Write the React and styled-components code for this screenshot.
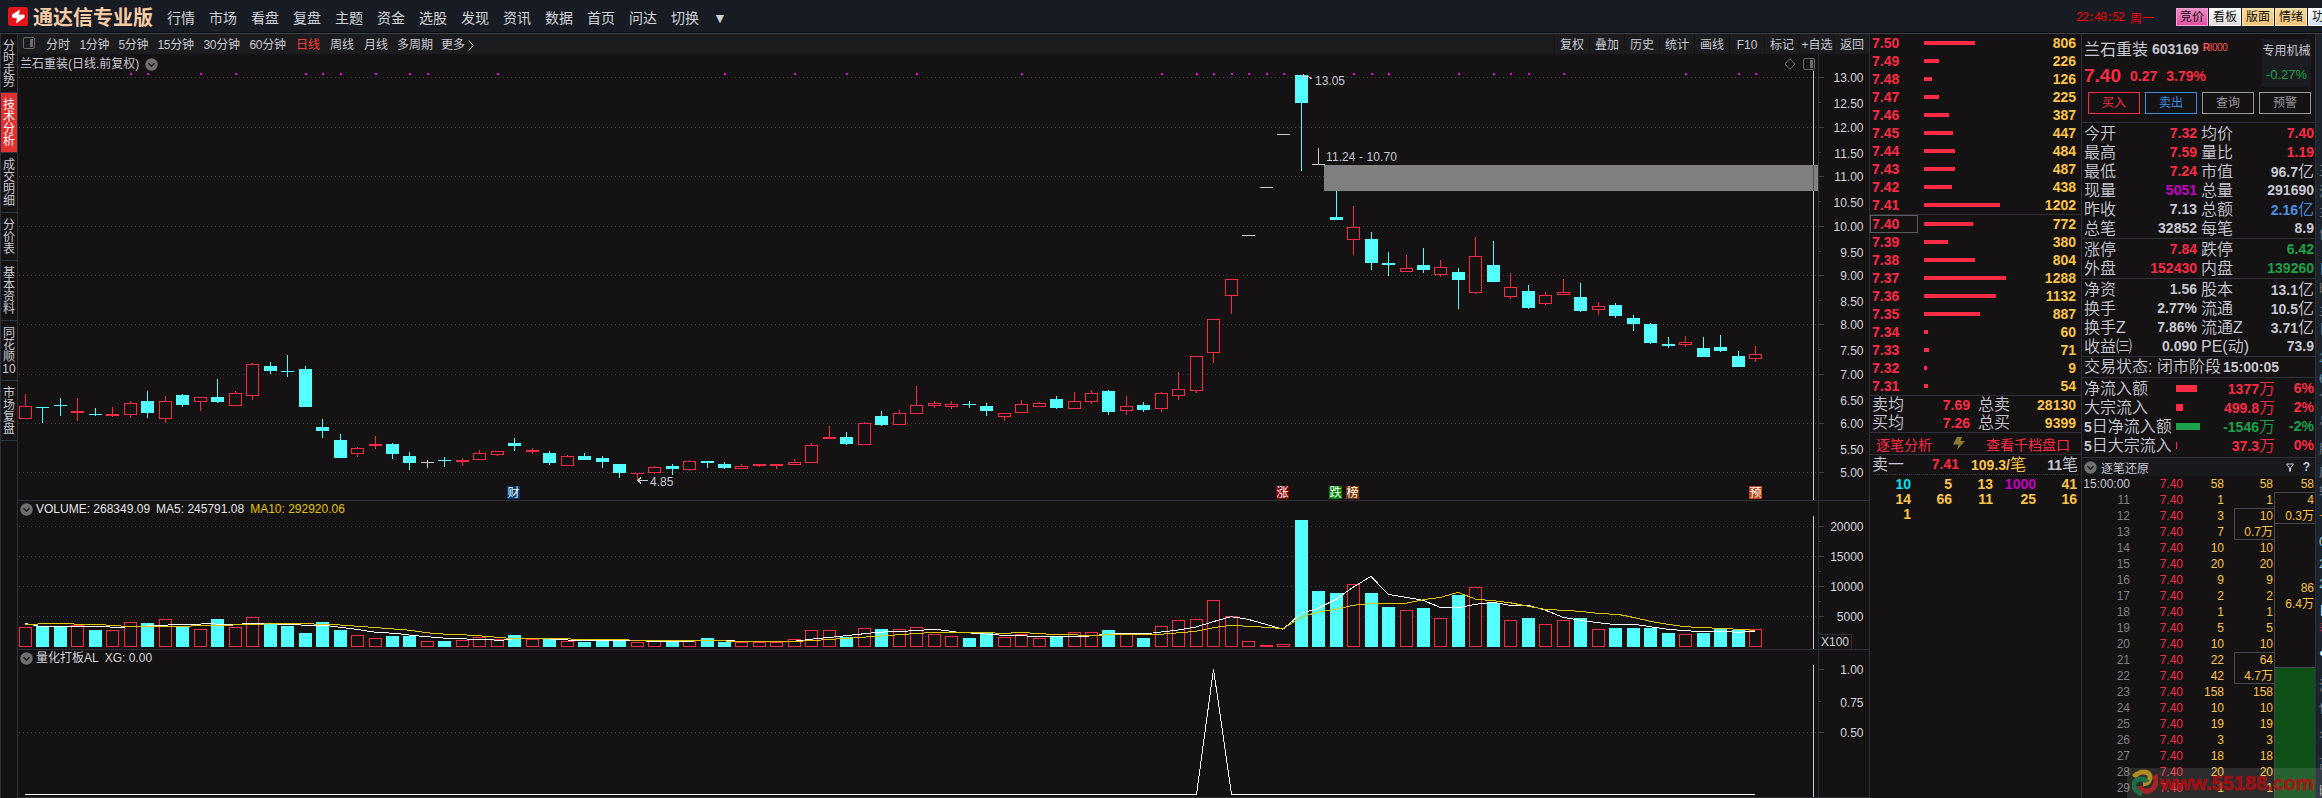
import React from "react";
import styled, { createGlobalStyle } from "styled-components";

const C = {
  bg: "#141213",
  bar: "#171c24",
  line: "#2d303b",
  text: "#c8c8d2",
  red: "#ff2b45",
  yellow: "#ffc54a",
  green: "#1ca24b",
  purple: "#c400c4",
  blue: "#4a90e2",
  cyan: "#54ffff",
  gray: "#808080",
};

const GlobalStyle = createGlobalStyle`
  * { box-sizing: border-box; }
  html, body { margin: 0; background: ${C.bg}; overflow: hidden; }
  body { font-family: "Liberation Sans", "Noto Sans CJK SC", sans-serif; font-size: 12px; color: ${C.text}; }
`;

/* ---------- frame ---------- */
const Page = styled.div`
  position: relative;
  width: 2322px;
  height: 798px;
  overflow: hidden;
  background: ${C.bg};
  white-space: nowrap;
`;
const TopBar = styled.header`
  display: flex;
  align-items: center;
  height: 34px;
  padding-left: 8px;
  background: ${C.bar};
  border-bottom: 1px solid #3a424c;
  box-shadow: inset 0 -1px #0a0c10;
`;
const Brand = styled.div`
  width: 134px;
  margin-left: 5px;
  font: bold 20px/32px "Noto Sans CJK SC", sans-serif;
  color: #f8cba4;
`;
const Menu = styled.nav`
  display: flex;
  align-items: center;
  gap: 14px;
  flex: 1;
  font-size: 14px;
  color: #d2d2d6;
`;
const MenuArrow = styled.span`
  padding-top: 3px;
`;
const Clock = styled.div`
  display: flex;
  gap: 6px;
  width: 100px;
  padding-top: 1px;
  color: #f40000;
  font-size: 12px;
`;
const Digits = styled.span`
  font-family: "Liberation Mono", monospace;
  letter-spacing: -1.2px;
  padding-top: 2px;
`;
const Skins = styled.div`
  display: flex;
  gap: 1px;
  width: 146px;
  overflow: hidden;
`;
const Skin = styled.div`
  flex: 0 0 32px;
  height: 18px;
  border: 1px solid ${(p) => p.$edge};
  background: ${(p) => p.$bg};
  color: #101010;
  font-size: 12px;
  line-height: 17px;
  padding-left: 3px;
`;
const Body = styled.main`
  display: flex;
  height: 764px;
`;

/* ---------- left tabs ---------- */
const SideTabs = styled.aside`
  width: 18px;
  border-left: 1px solid ${C.line};
  border-right: 1px solid #2c3139;
`;
const SideTab = styled.div`
  height: ${(p) => p.$h}px;
  padding-top: 6px;
  border-bottom: 1px solid #2f3540;
  background: ${(p) => (p.$active ? "#e03030" : "transparent")};
  color: ${(p) => (p.$active ? "#fff" : C.text)};
  font-size: 12px;
  line-height: 12px;
  text-align: center;
`;

/* ---------- chart column ---------- */
const ChartColumn = styled.section`
  width: 1851px;
  display: flex;
  flex-direction: column;
`;
const ToolBar = styled.div`
  display: flex;
  align-items: center;
  justify-content: space-between;
  height: 20px;
  padding-left: 5px;
  background: #1c1c1e;
`;
const Periods = styled.div`
  display: flex;
  align-items: center;
  line-height: 20px;
  padding-top: 2px;
`;
const Period = styled.span`
  width: ${(p) => p.$w}px;
  color: ${(p) => (p.$active ? "#ff3b3b" : C.text)};
  letter-spacing: ${(p) => (p.$tight ? "-0.3px" : "0")};
`;
const Tools = styled.div`
  display: flex;
`;
const Tool = styled.span`
  width: 35px;
  height: 20px;
  line-height: 22px;
  text-align: center;
  border-left: 1px solid #151517;
`;
const PanelTitle = styled.div`
  display: flex;
  align-items: center;
  gap: ${(p) => p.$gap ?? 6}px;
  height: ${(p) => p.$h}px;
  padding: 2px 0 0 2px;
  color: ${(p) => p.$color || C.text};
  line-height: ${(p) => p.$h}px;
`;
const Legend = styled.span`
  margin-left: ${(p) => (p.$first ? -3 : 0)}px;
  color: ${(p) => p.$color || "inherit"};
`;
const TitleTools = styled.span`
  display: flex;
  align-items: center;
  gap: 7px;
  margin-left: auto;
  margin-right: 53px;
`;
const Plot = styled.svg`
  display: block;
  overflow: visible;
  font-family: "Liberation Sans", "Noto Sans CJK SC", sans-serif;
  font-size: 12px;
`;
const Rule = styled.div`
  height: 1px;
  flex: none;
  background: ${C.line};
`;

/* ---------- price ladder ---------- */
const Ladder = styled.section`
  width: 213px;
  border-left: 1px solid ${C.line};
  border-right: 1px solid ${C.line};
`;
const LadderRow = styled.div`
  display: flex;
  align-items: center;
  height: 18px;
  padding-right: 5px;
  font: bold 14px/18px "Liberation Sans", sans-serif;
`;
const LadderPrice = styled.span`
  width: 48px;
  height: 18px;
  margin-right: 6px;
  line-height: ${(p) => (p.$boxed ? 16 : 18)}px;
  padding-left: ${(p) => (p.$boxed ? 1 : 2)}px;
  border: ${(p) => (p.$boxed ? "1px solid #5c5c60" : "0")};
  color: ${C.red};
`;
const Bar = styled.span`
  flex: none;
  height: ${(p) => p.$h}px;
  background: ${(p) => p.$color || C.red};
`;
const Value = styled.span`
  flex: ${(p) => (p.$w ? "none" : 1)};
  width: ${(p) => (p.$w ? p.$w + "px" : "auto")};
  text-align: right;
  color: ${(p) => p.$color || C.text};
  font-weight: bold;
  font-size: 14px;
`;
const Han = styled.span`
  font: 16px/1 "Noto Sans CJK SC", sans-serif;
  font-weight: 350;
`;
const QuoteRow = styled.div`
  display: flex;
  align-items: center;
  height: ${(p) => p.$h}px;
  line-height: ${(p) => p.$h}px;
  padding: 0 ${(p) => p.$pr ?? 1}px 0 2px;
`;
const Label = styled.span`
  flex: none;
  width: ${(p) => p.$w}px;
  padding-left: ${(p) => p.$pl || 0}px;
  font-size: 16px;
  font-weight: 350;
`;
const LabelDigit = styled.b`
  font-size: 14px;
`;
const LinkRow = styled.div`
  display: flex;
  align-items: center;
  justify-content: space-between;
  height: 21px;
  padding: 0 11px 0 6px;
  font-size: 14px;
  color: ${C.red};
`;
const Dotted = styled.div`
  margin: 0 3px 2px;
  border-bottom: 1px dotted #3a3d46;
`;
const QueueGrid = styled.div`
  display: grid;
  grid-template-columns: 41px 41px 41px 43px 41px;
  grid-auto-rows: 15px;
  font: bold 14px/15px "Liberation Sans", sans-serif;
  text-align: right;
`;
const QueueCell = styled.span`
  color: ${(p) => p.$color || C.yellow};
`;

/* ---------- quote panel ---------- */
const Quote = styled.section`
  width: 234px;
  border-right: 1px solid ${C.line};
`;
const QuoteHead = styled.div`
  height: 88px;
  padding: 5px 4px 0 2px;
`;
const HeadTop = styled.div`
  display: flex;
  justify-content: space-between;
  height: 48px;
`;
const NameLine = styled.div`
  display: flex;
  height: 21px;
  line-height: 21px;
  font-size: 16px;
`;
const Code = styled.b`
  margin-left: 4px;
  font-size: 14px;
`;
const Mark = styled.span`
  margin-left: 4px;
  color: #ff5252;
  font-size: 10px;
  line-height: 17px;
  letter-spacing: -0.4px;
`;
const PriceLine = styled.div`
  display: flex;
  align-items: center;
  gap: 9px;
  height: 24px;
  margin-top: 4px;
  color: ${C.red};
  font-weight: bold;
  font-size: 14px;
`;
const LastPrice = styled.span`
  font-size: 19px;
`;
const Sector = styled.div`
  width: 49px;
  background: #1b1c1f;
  text-align: center;
  line-height: 24px;
`;
const SectorChange = styled.div`
  color: ${C.green};
  font-size: 13px;
`;
const Actions = styled.div`
  display: flex;
  gap: 5px;
  margin: 5px 0 0 4px;
`;
const Action = styled.span`
  width: 52px;
  height: 22px;
  line-height: 20px;
  text-align: center;
  border: 1px solid ${(p) => p.$color};
  color: ${(p) => p.$color};
`;
const StatGroup = styled.div`
  padding-top: 1px;
`;
const FlowGroup = styled.div`
  padding: 1px 0 2px;
`;
const TickHead = styled.div`
  display: flex;
  align-items: center;
  gap: 4px;
  height: 18px;
  padding: 0 5px 0 2px;
  background: #18191c;
`;
const TickTools = styled.span`
  display: flex;
  align-items: center;
  gap: 9px;
  margin-left: auto;
  font-weight: bold;
`;
const Ticks = styled.div`
  display: flex;
  height: 322px;
  overflow: hidden;
  text-align: right;
`;
const TickCol = styled.div`
  flex: none;
  width: ${(p) => p.$w}px;
  padding-left: ${(p) => p.$pl || 0}px;
  color: ${(p) => p.$color || C.yellow};
  line-height: 16px;
`;
const TickCell = styled.div`
  height: ${(p) => (p.$rows || 1) * 16}px;
  padding-right: ${(p) => p.$pr ?? 1}px;
  color: ${(p) => p.$color || "inherit"};
`;
const TickBox = styled(TickCell)`
  display: flex;
  flex-direction: column;
  justify-content: center;
  border: 1px solid #44474e;
  border-top-width: ${(p) => (p.$joined ? 0 : 1)}px;
  border-right-width: 0;
  background: ${(p) => p.$fill || "transparent"};
`;
const Edge = styled.section`
  flex: 1;
  overflow: hidden;
  padding: 0 0 0 3px;
  background: #1b232d;
`;
const EdgeText = styled.div`
  height: ${(p) => p.$h}px;
  padding-top: ${(p) => p.$h - 18}px;
  line-height: 16px;
  font-size: 13px;
  color: ${(p) => p.$color || "#6d737c"};
`;
const Watermark = styled.div`
  position: absolute;
  right: 0;
  bottom: 0;
  display: flex;
  align-items: center;
  gap: 2px;
  width: 195px;
  height: 30px;
  padding-left: 5px;
  background: rgba(255, 255, 255, 0.11);
  color: rgba(190, 8, 12, 0.72);
  font: bold 20px/28px "Liberation Sans", sans-serif;
  -webkit-text-stroke: 0.7px rgba(190, 8, 12, 0.72);
`;

/* ---------- data ---------- */
// Candle: kind, high, body top, body bottom, low, in thirds of a pixel below the base line.
const early = [
  "r 192 228 267 267", "c 231 231 234 279", "c 204 225 228 258", "r 204 243 249 273", "c 234 252 255 258",
  "r 231 252 258 261", "r 213 219 255 264", "c 183 213 249 264", "r 198 213 267 279", "c 192 195 225 231",
  "r 201 201 216 243", "c 147 201 216 219", "r 183 189 228 228", "r 99 102 198 210", "c 96 108 123 132",
  "c 75 123 126 141", "c 108 117 231 231", "c 267 291 303 324", "c 312 330 384 384", "r 351 354 372 381",
  "r 318 342 348 357", "c 339 342 372 387", "c 366 378 399 420", "w 390 396 399 414", "c 381 390 393 411",
  "r 384 390 396 408", "r 360 369 390 390", "r 363 363 375 378", "c 324 339 348 363", "r 354 360 366 372",
  "c 363 369 399 405", "r 375 378 408 408", "c 369 378 390 390", "c 378 384 396 414", "c 402 402 429 444",
  "r 429 429 432 450", "r 408 411 429 432", "c 402 408 417 435", "r 390 393 420 423", "c 393 393 399 414",
  "c 396 402 414 417", "r 402 408 417 417", "r 402 402 408 411", "r 402 402 408 417", "r 387 396 405 405",
  "r 339 345 399 399", "r 288 321 327 327", "c 306 321 342 345", "r 276 279 345 345", "c 243 258 285 288",
  "r 240 249 285 285", "r 168 225 252 252", "r 213 219 228 234", "r 213 222 231 237", "c 213 222 225 234",
  "c 219 228 243 258", "r 249 249 261 273", "r 210 222 249 249", "r 216 219 231 231", "c 198 207 234 237",
  "r 186 213 237 237", "r 180 189 216 222", "c 180 183 246 255", "r 198 228 243 255", "c 216 225 240 246",
  "r 186 189 237 246", "r 126 177 198 210", "r 78 78 183 189",
];
const late = [
  "r 777 777 879 909", "r 657 657 708 762", "w 525 525 528 528", "w 381 381 384 384", "w 222 222 225 225",
  "c 45 45 129 333", "w 264 312 315 315", "c 393 471 480 480", "r 438 501 540 585", "c 516 537 609 630",
  "c 576 609 615 648", "r 585 624 636 636", "c 564 615 630 639", "r 600 621 645 651", "c 624 636 660 747",
  "r 531 588 699 702", "c 543 615 666 666", "r 639 681 711 717", "c 675 693 744 747", "r 696 705 732 735",
  "r 657 696 705 705", "c 669 711 753 756", "r 726 738 750 765", "c 729 735 768 774", "c 765 774 792 813",
  "c 789 792 849 852", "c 831 852 858 864", "r 828 846 855 861", "c 831 864 891 891", "c 825 861 873 876",
  "c 873 888 921 921", "r 858 882 897 906",
];
const parse = (base) => (s) => {
  const [kind, ...v] = s.split(" ");
  const [high, top, bottom, low] = v.map((n) => Math.round(base + n / 3));
  return { kind, high, top, bottom, low };
};
const candles = [...early.map(parse(330)), ...late.map(parse(60))];
const volumes = [
  ...[891, 888, 888, 885, 900, 900, 876, 879, 867, 888, 897, 867, 891, 861, 882, 888, 909, 876, 900, 915, 924, 918,
    918, 933, 933, 930, 921, 927, 915, 927, 927, 933, 936, 933, 933, 936, 933, 936, 933, 924, 936, 936, 936, 936,
    927, 900, 900, 921, 894, 897, 897, 891, 912, 918, 924, 909, 921, 912, 924, 921, 906, 906, 900, 912, 924, 888,
    870].map((v) => Math.round(330 + v / 3)),
  ...[432, 375, 423, 498, 510, 507, 135, 348, 354, 327, 354, 396, 405, 399, 429, 360, 336, 384, 435, 429, 447, 435,
    429, 462, 459, 459, 459, 474, 477, 474, 462, 465, 462].map((v) => Math.round(475 + v / 3)),
];
const xAt = (i) => Math.round(25 + 17.475 * i);

// Moving averages: [x, y] knots.
const ma5 = [
  [25, 623.5], [38, 626], [81, 626], [119, 627.3], [158, 625.5], [178, 624.5], [210, 623.8], [229, 624.5], [261, 623.3],
  [308, 625.3], [330, 626], [356, 629.3], [376, 632.3], [395, 633.3], [415, 635.7], [447, 638.3], [475, 639.3],
  [502, 640.3], [514, 638.7], [550, 639], [573, 640.3], [600, 640.6], [679, 641.3], [715, 640.6], [750, 641.3],
  [794, 641.3], [813, 639], [837, 636.7], [877, 632.3], [908, 631], [936, 629.3], [956, 632], [999, 635], [1043, 636.6],
  [1082, 636.6], [1114, 633.7], [1153, 633], [1176, 630.3], [1196, 627], [1213, 621.7], [1231, 616.7], [1248, 619.3],
  [1266, 624.3], [1283, 629.3], [1301, 613.3], [1318, 608.3], [1336, 599.3], [1353, 587.3], [1371, 576.3], [1388, 594.3],
  [1406, 597.3], [1423, 600.3], [1441, 607.7], [1458, 607.7], [1476, 604.3], [1493, 602.3], [1510, 605.3], [1528, 605.3],
  [1545, 610], [1563, 617.3], [1580, 620.3], [1598, 622.7], [1613, 624.3], [1635, 624.3], [1650, 626.7], [1668, 629.3],
  [1685, 630.7], [1703, 631.7], [1721, 631.3], [1738, 632.3], [1755, 631.3],
];
const ma10 = [
  [25, 624.3], [51, 623.7], [95, 624.3], [126, 626.3], [170, 626.3], [213, 625.7], [253, 624.3], [292, 623.3],
  [336, 624.7], [372, 627.3], [407, 630], [435, 633.7], [474, 635.3], [510, 638.3], [553, 638.7], [600, 639.5],
  [647, 640.3], [715, 640.3], [730, 641.3], [798, 641.3], [821, 640], [877, 636.3], [928, 632.7], [987, 632.3],
  [1003, 633.7], [1019, 632.3], [1051, 634.3], [1090, 635.3], [1130, 634.3], [1161, 634.3], [1196, 631.3],
  [1213, 627.7], [1231, 625.3], [1266, 627.3], [1283, 628.7], [1301, 617.3], [1318, 612], [1336, 609.3], [1353, 605.3],
  [1371, 603.3], [1406, 603.3], [1423, 599.7], [1441, 597.3], [1458, 592.3], [1476, 599.3], [1493, 600.7], [1510, 602.7],
  [1528, 606.3], [1545, 609.3], [1580, 611.3], [1598, 613.3], [1620, 614.7], [1635, 617.7], [1650, 621.3], [1668, 624.3],
  [1685, 626.7], [1703, 627.7], [1721, 628.3], [1738, 629.3], [1755, 630.3],
];
const signals = [6, 7, 10, 12, 16, 17, 18, 20, 22, 23, 27, 40, 44, 47, 51, 57, 65, 67, 68, 69, 70, 71, 72, 76, 77, 78, 82,
  84, 85, 86, 88, 95, 98, 99];
const priceTicks = [
  ["13.00", 77, 1], ["12.50", 102], ["12.00", 127, 1], ["11.50", 152], ["11.00", 176, 1], ["10.50", 201],
  ["10.00", 226, 1], ["9.50", 251], ["9.00", 275, 1], ["8.50", 300], ["8.00", 324, 1], ["7.50", 349], ["7.00", 374, 1],
  ["6.50", 399], ["6.00", 423, 1], ["5.50", 448], ["5.00", 472, 1],
];
const volumeTicks = [
  ["20000", 526, 1], ["", 541], ["15000", 556, 1], ["", 571], ["10000", 586, 1], ["", 601], ["5000", 616, 1],
];
const signalTicks = [["1.00", 669, 2], ["0.75", 701], ["0.50", 732, 1]];
const tags = [
  ["财", 507, "#00386c"], ["涨", 1276, "#800000"], ["跌", 1329, "#008000"], ["榜", 1346, "#7c3600"], ["预", 1749, "#b9450c"],
];

const ladder = [
  ["7.50", 51, 806], ["7.49", 15, 226], ["7.48", 8, 126], ["7.47", 15, 225], ["7.46", 25, 387], ["7.45", 29, 447],
  ["7.44", 31, 484], ["7.43", 31, 487], ["7.42", 28, 438], ["7.41", 76, 1202], ["7.40", 49, 772], ["7.39", 24, 380],
  ["7.38", 51, 804], ["7.37", 82, 1288], ["7.36", 72, 1132], ["7.35", 56, 887], ["7.34", 4, 60], ["7.33", 5, 71],
  ["7.32", 3, 9], ["7.31", 4, 54],
];
const queue = [[10, "#00e0f0"], [5], [13], [1000, C.purple], [41], [14], [66], [11], [25], [16], [1]];
const stats = [
  [
    ["今开", "7.32", C.red, "均价", "7.40", C.red],
    ["最高", "7.59", C.red, "量比", "1.19", C.red],
    ["最低", "7.24", C.red, "市值", "96.7亿"],
    ["现量", "5051", C.purple, "总量", "291690"],
    ["昨收", "7.13", null, "总额", "2.16亿", C.blue],
    ["总笔", "32852", null, "每笔", "8.9"],
  ],
  [
    ["涨停", "7.84", C.red, "跌停", "6.42", C.green],
    ["外盘", "152430", C.red, "内盘", "139260", C.green],
  ],
  [
    ["净资", "1.56", null, "股本", "13.1亿"],
    ["换手", "2.77%", null, "流通", "10.5亿"],
    ["换手Z", "7.86%", null, "流通Z", "3.71亿"],
    ["收益㈢", "0.090", null, "PE(动)", "73.9"],
  ],
];
const flows = [
  ["", "净流入额", 21, "1377万", "6%", C.red],
  ["", "大宗流入", 7, "499.8万", "2%", C.red],
  ["5", "日净流入额", 24, "-1546万", "-2%", C.green],
  ["5", "日大宗流入", 1, "37.3万", "0%", C.red],
];
const tickVolumes = [58, 1, 3, 7, 10, 20, 9, 2, 1, 5, 10, 22, 42, 158, 10, 19, 3, 18, 20, 1];
const merged = [
  [58], [1], [10, "0.7万"], [10], [20], [9], [2], [1], [5], [10], [64, "4.7万"], [158], [10], [19], [3], [18], [20], [1],
];
const edgeTexts = [
  [147, "王"], [21, "沪"], [20, "主"], [22, "仙"], [35, "日", "#4d7f96"], [20, "昨", "#6f6a60"], [22, "主"], [18, "日"],
  [29, "2", "#4d7f96"], [21, "6", "#5b93ad"], [18, "个"], [23, "总"], [29, "股"], [23, "成"], [20, "转"],
  [24, "一", "#d08030"], [26, "0", "#9cc7e0"], [22, "2", "#8fc4d8"], [20, "2", "#8fc4d8"], [26, "自", "#e0e0e0"],
  [19, "春", "#c0284a"], [24, "●", "#ffffff"], [33, "沪"], [22, "仙"], [28, "名"], [28, "高"], [27, "时", "#aaa"],
];

/* ---------- small parts ---------- */
function Mixed({ children }) {
  return String(children)
    .split(/([\u3400-\u9fff]+)/)
    .map((part, i) => (i % 2 ? <Han key={i}>{part}</Han> : part));
}
const Chevron = () => (
  <svg width="13" height="13" viewBox="0 0 13 13">
    <circle cx="6.5" cy="6.5" r="6.2" fill="#6f6f72" />
    <path d="M3.5 5.2 6.5 8.2 9.5 5.2" fill="none" stroke="#1c1c1e" strokeWidth="1.5" />
  </svg>
);
const PaneIcon = () => (
  <svg width="13" height="12" viewBox="0 0 13 12">
    <rect x="0.5" y="0.5" width="11" height="11" rx="1.5" fill="none" stroke="#6a6a6e" />
    <rect x="7" y="2" width="3" height="8" fill="#6a6a6e" />
  </svg>
);

function Axis({ ticks }) {
  return ticks.map(([text, y, major]) => (
    <g key={y}>
      {major === 1 && <line x1="19" x2="1817" y1={y + 0.5} y2={y + 0.5} stroke="#3c3e49" strokeDasharray="1 3" />}
      <rect x="1818" y={y} width={major ? 6 : 3} height="1" fill="#3b3f4a" />
      <text x="1863.5" y={y + (major ? 5 : 6)} textAnchor="end" fill="#d4d4d8">{text}</text>
    </g>
  ));
}
function Frame({ from, to, cursor }) {
  return (
    <>
      <rect x="1818" y={from} width="1" height={to - from} fill={C.line} />
      <rect x="1813" y={cursor} width="1" height={to - cursor} fill="#c8c8d0" />
    </>
  );
}
function Block({ x, top, bottom, hollow, color }) {
  const h = Math.max(1, bottom - top);
  return hollow && h > 2 ? (
    <rect x={x - 5.5} y={top + 0.5} width="12" height={h - 1} fill={C.bg} stroke={color} />
  ) : (
    <rect x={x - 6} y={top} width="13" height={h} fill={color} />
  );
}
const tint = { r: C.red, c: C.cyan, w: "#c8c8d2" };
const path = (pts) => pts.map((p) => p.join(",")).join(" ");

function PricePlot() {
  return (
    <Plot width="1851" height="428" viewBox="18 72 1851 428" shapeRendering="crispEdges">
      <Axis ticks={priceTicks} />
      {signals.map((i) => (
        <rect key={i} x={xAt(i)} y="73" width="2" height="2" fill="#f000f0" />
      ))}
      {candles.map((k, i) => (
        <g key={i}>
          <rect x={xAt(i)} y={k.high} width="1" height={Math.max(1, k.low - k.high)} fill={tint[k.kind]} />
          <Block x={xAt(i)} top={k.top} bottom={k.bottom} hollow={k.kind === "r"} color={tint[k.kind]} />
        </g>
      ))}
      <Frame from={54} to={500} cursor={71} />
      <rect x="1298" y="165" width="520" height="26" fill="#808080" transform="translate(26 0) scale(1)" clipPath="inset(0 26px 0 0)" />
      <rect x="1813" y="165" width="1" height="26" fill="#55555c" />
      <g fill="#c8c8d2">
        <text x="1315" y="85">13.05</text>
        <text x="1326" y="161" textLength="71">11.24 - 10.70</text>
        <text x="650" y="486">4.85</text>
      </g>
      <path d="M1302 76.5h6l4 2.5M1303 74v5M648 480.500h-10m3-3-3 3 3 3" fill="none" stroke="#c8c8d2" />
      {tags.map(([text, x, fill]) => (
        <g key={text}>
          <rect x={x} y="486" width="13" height="13" fill={fill} />
          <text x={x + 0.5} y="497" fill="#fff">{text}</text>
        </g>
      ))}
    </Plot>
  );
}
function VolumePlot() {
  return (
    <Plot width="1851" height="133" viewBox="18 516 1851 133" shapeRendering="crispEdges">
      <Axis ticks={volumeTicks} />
      {volumes.map((top, i) => {
        const hollow = candles[i].kind === "r" || (candles[i].kind === "w" && i !== 74);
        return <Block key={i} x={xAt(i)} top={top} bottom={647} hollow={hollow} color={hollow ? C.red : C.cyan} />;
      })}
      <polyline points={path(ma5)} fill="none" stroke="#fff" />
      <polyline points={path(ma10)} fill="none" stroke="#e0c400" />
      <Frame from={501} to={649} cursor={516} />
      <rect x="1818.5" y="634.5" width="33" height="15" fill="none" stroke={C.line} />
      <text x="1821" y="646" fill="#d4d4d8">X100</text>
    </Plot>
  );
}
function SignalPlot() {
  return (
    <Plot width="1851" height="132" viewBox="18 665 1851 132" shapeRendering="crispEdges">
      <Axis ticks={signalTicks} />
      <polyline points="25,794.5 1196.500,794.5 1213.500,669 1231.500,794.5 1755,794.5" fill="none" stroke="#fff" />
      <Frame from={650} to={797} cursor={665} />
    </Plot>
  );
}

const periods = [
  ["分时", 33.5], ["1分钟", 39], ["5分钟", 39], ["15分钟", 46], ["30分钟", 46], ["60分钟", 46.5], ["日线", 34], ["周线", 34],
  ["月线", 33], ["多周期", 44], ["更多", 27],
];
const sideTabs = [
  ["分时走势", 59], ["技术分析", 60], ["成交明细", 60], ["分价表", 48], ["基本资料", 60], ["同花顺", 60, "10"], ["市场复盘", 60],
];

export default function App() {
  return (
    <Page>
      <GlobalStyle />
      <TopBar>
        <svg width="20" height="19" viewBox="0 0 20 19">
          <rect width="20" height="19" rx="2.500" fill="#e3151b" />
          <path d="M12 2.500 4 7.500v3l5 1-1 5 8.500-6V7.500L11 7.800z" fill="#fff" />
        </svg>
        <Brand>通达信专业版</Brand>
        <Menu>
          {"行情 市场 看盘 复盘 主题 资金 选股 发现 资讯 数据 首页 问达 切换".split(" ").map((m) => (
            <span key={m}>{m}</span>
          ))}
          <MenuArrow>▼</MenuArrow>
        </Menu>
        <Clock>
          <Digits>22:40:52</Digits>
          <span>周一</span>
        </Clock>
        <Skins>
          <Skin $bg="linear-gradient(#f08cc8,#e050a4)" $edge="#f0a0d0">竞价</Skin>
          <Skin $bg="linear-gradient(#ffffff,#dcdcdc)" $edge="#ffffff">看板</Skin>
          <Skin $bg="linear-gradient(#fbdc9c,#efc47c)" $edge="#ffe6b4">版面</Skin>
          <Skin $bg="linear-gradient(#fbdc9c,#efc47c)" $edge="#ffe6b4">情绪</Skin>
          <Skin $bg="linear-gradient(#ffffff,#ccdcf8)" $edge="#ffffff">功能</Skin>
        </Skins>
      </TopBar>
      <Body>
        <SideTabs>
          {sideTabs.map(([name, h, extra]) => (
            <SideTab key={name} $h={h} $active={name === "技术分析"}>
              {[...name].map((ch) => (
                <div key={ch}>{ch}</div>
              ))}
              {extra}
            </SideTab>
          ))}
        </SideTabs>

        <ChartColumn>
          <ToolBar>
            <Periods>
              <Period $w={23}><PaneIcon /></Period>
              {periods.map(([name, w]) => (
                <Period key={name} $w={w} $active={name === "日线"} $tight={/\d/.test(name)}>{name}</Period>
              ))}
              <svg width="6" height="11" viewBox="0 0 6 11">
                <path d="M1 .5 5 5.500 1 10.500" fill="none" stroke={C.text} />
              </svg>
            </Periods>
            <Tools>
              {"复权 叠加 历史 统计 画线 F10 标记 +自选 返回".split(" ").map((t) => (
                <Tool key={t}>{t}</Tool>
              ))}
            </Tools>
          </ToolBar>
          <PanelTitle $h={18}>
            <span>兰石重装(日线.前复权)</span>
            <Chevron />
            <TitleTools>
              <svg width="12" height="12" viewBox="0 0 12 12">
                <path d="M6 .7 11 6 6 11.300 1 6z" fill="none" stroke="#77777b" />
              </svg>
              <PaneIcon />
            </TitleTools>
          </PanelTitle>
          <PricePlot />
          <Rule />
          <PanelTitle $h={15} $color="#e4e4e8">
            <Chevron />
            <Legend $first>VOLUME: 268349.09</Legend>
            <Legend>MA5: 245791.08</Legend>
            <Legend $color="#e0c400">MA10: 292920.06</Legend>
          </PanelTitle>
          <VolumePlot />
          <Rule />
          <PanelTitle $h={15} $color="#d4d4d8">
            <Chevron />
            <Legend $first>量化打板AL</Legend>
            <Legend>XG: 0.00</Legend>
          </PanelTitle>
          <SignalPlot />
          <Rule />
        </ChartColumn>

        <Ladder>
          {ladder.map(([price, w, vol], i) => (
            <React.Fragment key={price}>
              {i === 10 && <Rule />}
              <LadderRow>
                <LadderPrice $boxed={i === 10}>{price}</LadderPrice>
                <Bar $h={4} style={{ width: w }} />
                <Value $color={C.yellow}>{vol}</Value>
              </LadderRow>
            </React.Fragment>
          ))}
          <Rule />
          <QuoteRow $h={18} $pr={5}>
            <Label $w={45}>卖均</Label>
            <Value $w={53} $color={C.red}>7.69</Value>
            <Label $w={48} $pl={8}>总卖</Label>
            <Value $color={C.yellow}>28130</Value>
          </QuoteRow>
          <QuoteRow $h={18} $pr={5}>
            <Label $w={45}>买均</Label>
            <Value $w={53} $color={C.red}>7.26</Value>
            <Label $w={48} $pl={8}>总买</Label>
            <Value $color={C.yellow}>9399</Value>
          </QuoteRow>
          <Rule />
          <LinkRow>
            <span>逐笔分析</span>
            <svg width="12" height="13" viewBox="0 0 12 13">
              <path d="M4 0h5L7.500 4H12L4 13 5.500 7.500H0z" fill="#8c7830" />
            </svg>
            <span>查看千档盘口</span>
          </LinkRow>
          <Rule />
          <QuoteRow $h={19} $pr={3}>
            <Label $w={40}>卖一</Label>
            <Value $w={47} $color={C.red}>7.41</Value>
            <Value $w={67} $color={C.yellow}><Mixed>109.3/笔</Mixed></Value>
            <Value><Mixed>11笔</Mixed></Value>
          </QuoteRow>
          <Dotted />
          <QueueGrid>
            {queue.map(([n, color], i) => (
              <QueueCell key={i} $color={color}>{n}</QueueCell>
            ))}
          </QueueGrid>
        </Ladder>

        <Quote>
          <QuoteHead>
            <HeadTop>
              <div>
                <NameLine>
                  兰石重装<Code>603169</Code>
                  <Mark><b>R</b>I000</Mark>
                </NameLine>
                <PriceLine>
                  <LastPrice>7.40</LastPrice>
                  <span>0.27</span>
                  <span>3.79%</span>
                </PriceLine>
              </div>
              <Sector>
                专用机械
                <SectorChange>-0.27%</SectorChange>
              </Sector>
            </HeadTop>
            <Actions>
              <Action $color={C.red}>买入</Action>
              <Action $color="#3a8fe0">卖出</Action>
              <Action $color="#98989c">查询</Action>
              <Action $color="#98989c">预警</Action>
            </Actions>
          </QuoteHead>
          {stats.map((group, g) => (
            <React.Fragment key={g}>
              <Rule />
              <StatGroup>
                {group.map(([a, av, ac, b, bv, bc]) => (
                  <QuoteRow key={a} $h={19}>
                    <Label $w={50}>{a}</Label>
                    <Value $w={63} $color={ac}>{av}</Value>
                    <Label $w={50} $pl={4}>{b}</Label>
                    <Value $color={bc}><Mixed>{bv}</Mixed></Value>
                  </QuoteRow>
                ))}
              </StatGroup>
            </React.Fragment>
          ))}
          <Rule />
          <QuoteRow $h={20}>
            <Label $w={139}>交易状态: 闭市阶段</Label>
            <Value as="b" $w={56}>15:00:05</Value>
          </QuoteRow>
          <Rule />
          <FlowGroup>
            {flows.map(([n, name, w, v, pct, color]) => (
              <QuoteRow key={name} $h={19}>
                <Label $w={92}>{n && <LabelDigit>{n}</LabelDigit>}{name}</Label>
                <Bar $h={7} $color={color} style={{ width: w }} />
                <Value $color={color}><Mixed>{v}</Mixed></Value>
                <Value $w={39} $color={color}>{pct}</Value>
              </QuoteRow>
            ))}
          </FlowGroup>
          <Rule />
          <TickHead>
            <Chevron />
            <span>逐笔还原</span>
            <TickTools>
              <svg width="8" height="9" viewBox="0 0 8 9">
                <path d="M.5 1h7L4.500 5v3.500M.5 1l3 4v3.500" fill="none" stroke={C.text} />
              </svg>
              ?
            </TickTools>
          </TickHead>
          <Ticks>
            <TickCol $w={48} $color={C.gray}>
              <TickCell $pr={0} $color={C.text}>15:00:00</TickCell>
              {tickVolumes.slice(1).map((_, i) => (
                <TickCell key={i} $pr={0}>{i + 11}</TickCell>
              ))}
            </TickCol>
            <TickCol $w={54} $color={C.red}>
              {tickVolumes.map((_, i) => (
                <TickCell key={i}>7.40</TickCell>
              ))}
            </TickCol>
            <TickCol $w={41}>
              {tickVolumes.map((v, i) => (
                <TickCell key={i}>{v}</TickCell>
              ))}
            </TickCol>
            <TickCol $w={49} $pl={9}>
              {merged.map(([v, sum], i) =>
                sum ? (
                  <TickBox key={i} $rows={2}>
                    <span>{v}</span>
                    <span>{sum}</span>
                  </TickBox>
                ) : (
                  <TickCell key={i}>{v}</TickCell>
                )
              )}
            </TickCol>
            <TickCol $w={41}>
              <TickCell>58</TickCell>
              <TickBox $rows={2}>
                <span>4</span>
                <span>0.3万</span>
              </TickBox>
              <TickBox $rows={9} $joined>
                <span>86</span>
                <span>6.4万</span>
              </TickBox>
              <TickBox $rows={9} $joined $fill="#0f4f18" />
            </TickCol>
          </Ticks>
        </Quote>
        <Edge>
          {edgeTexts.map(([h, t, color], i) => (
            <EdgeText key={i} $h={h} $color={color}>{t}</EdgeText>
          ))}
        </Edge>
      </Body>
      <Watermark>
        <svg width="26" height="28" viewBox="0 0 26 28" fill="none" strokeWidth="5">
          <path d="M2 8C8 0 22 2 17 12c-1 2-3 3-6 3" stroke="#b08a20" />
          <path d="M23 6c4 10-4 20-13 15-2-1-2-3-2-4" stroke="#a82424" />
          <path d="M10 25C0 22-1 10 9 10c3 0 5 1 6 3" stroke="#1c7048" />
        </svg>
        <span>www.55188.com</span>
      </Watermark>
    </Page>
  );
}
